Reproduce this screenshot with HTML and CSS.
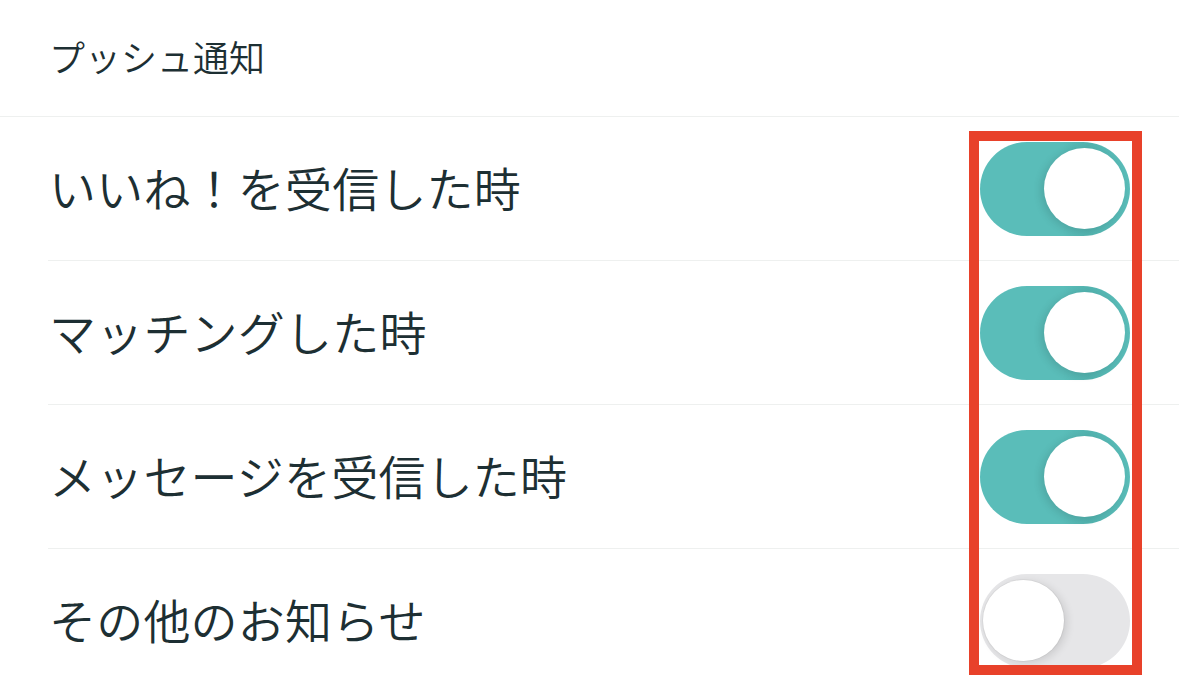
FILE: index.html
```html
<!DOCTYPE html>
<html lang="ja">
<head>
<meta charset="utf-8">
<title>プッシュ通知</title>
<link rel="stylesheet" href="styles.css">
</head>
<body>
<div class="settings">
  <div class="section-title">プッシュ通知</div>
  <ul class="list">
    <li class="row">
      <span class="label">いいね！を受信した時</span>
      <span class="toggle on"><span class="knob"></span></span>
    </li>
    <li class="row">
      <span class="label">マッチングした時</span>
      <span class="toggle on"><span class="knob"></span></span>
    </li>
    <li class="row">
      <span class="label">メッセージを受信した時</span>
      <span class="toggle on"><span class="knob"></span></span>
    </li>
    <li class="row">
      <span class="label">その他のお知らせ</span>
      <span class="toggle"><span class="knob"></span></span>
    </li>
  </ul>
  <div class="highlight"></div>
</div>
</body>
</html>
```
FILE: styles.css
```css
html, body {margin:0; padding:0; background:#ffffff;}
body {font-family:"Noto Sans CJK JP", "Noto Sans", sans-serif; color:#1d2f33;}

.settings {position:relative; width:1179px; height:691px; overflow:hidden;}

.section-title {height:117px; box-sizing:border-box; padding:0 0 4px 49px; display:flex; align-items:center; font-size:36px; font-weight:350; border-bottom:1px solid #eef0ef;}

.list {list-style:none; margin:0 0 0 48px; padding:0;}
.row {height:143px; display:flex; align-items:center; justify-content:space-between; border-bottom:1px solid #eef0ef; padding-left:1px;}
.row:last-child {border-bottom:none;}
.label {font-size:47px; font-weight:350; letter-spacing:0.2px; padding-bottom:4px;}

.toggle {position:relative; width:150px; height:94px; border-radius:47px; background:#e6e6e8; margin-right:49px; flex-shrink:0;}
.toggle.on {background:linear-gradient(90deg, #5abdb9 0%, #5abdb9 55%, #52b3af 72%, #5abdb9 100%);}
.knob {position:absolute; top:6px; left:3px; width:81px; height:81px; border-radius:50%; background:#ffffff; box-shadow:3px 2px 8px rgba(0,0,0,0.12), 0 0 0 1px rgba(0,0,0,0.04);}
.toggle.on .knob {left:auto; right:5px; box-shadow:-3px 2px 8px rgba(0,0,0,0.12);}

.highlight {position:absolute; left:969px; top:131px; width:173px; height:544px; box-sizing:border-box; border:10px solid #e8412a;}
```
